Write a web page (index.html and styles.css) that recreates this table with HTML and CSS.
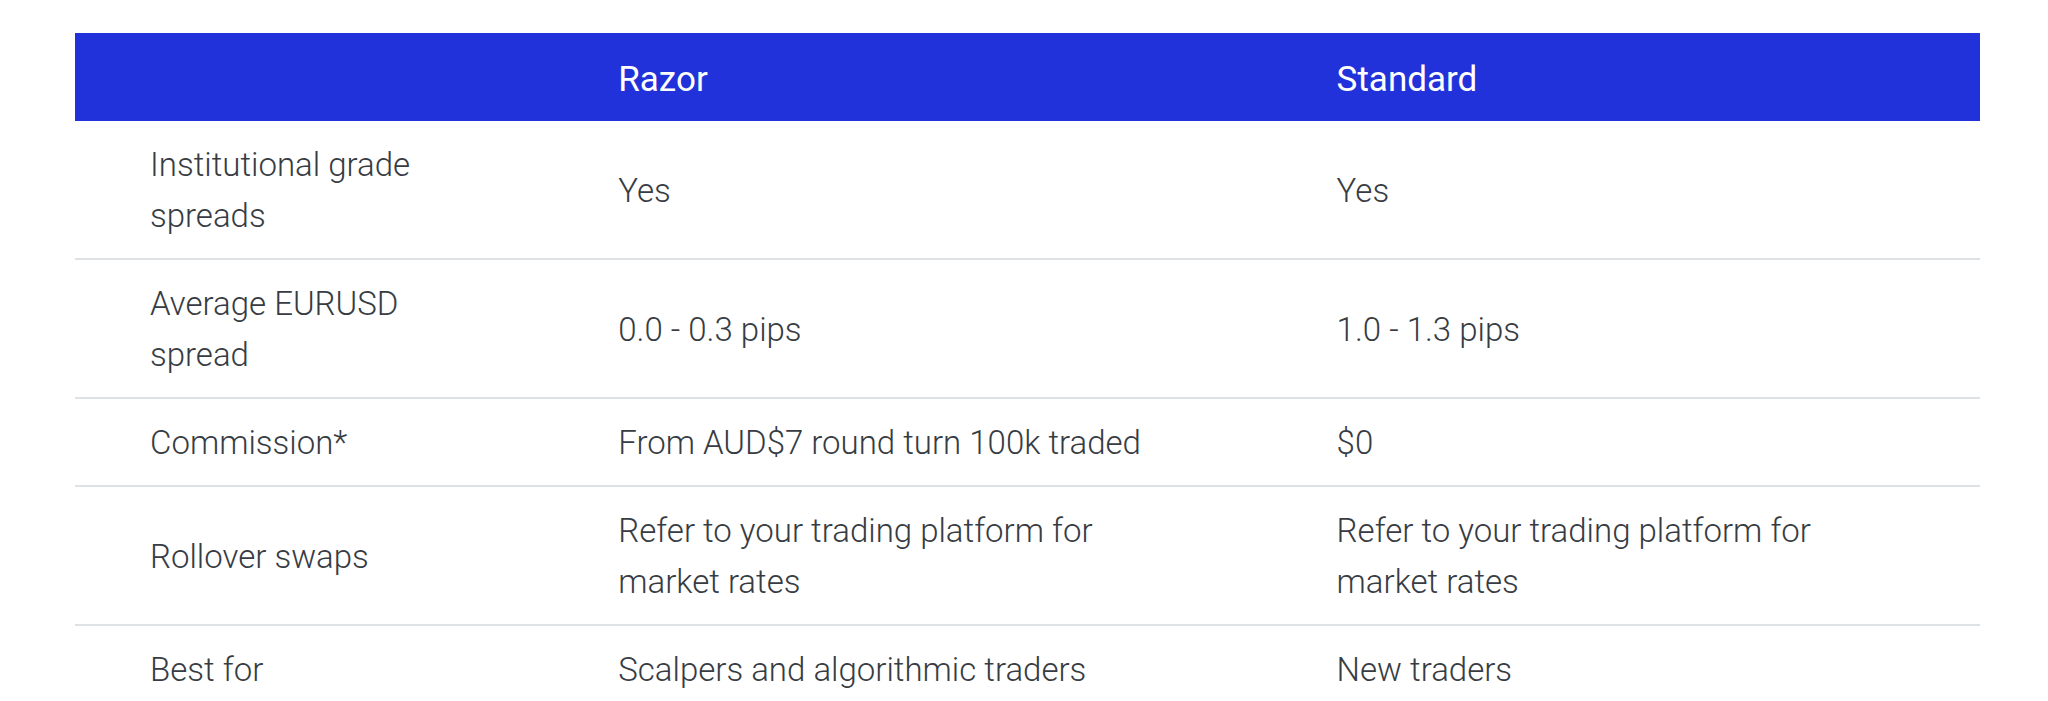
FILE: index.html
```html
<!DOCTYPE html>
<html lang="en">
<head>
<meta charset="utf-8">
<title>Account comparison</title>
<link rel="stylesheet" href="styles.css">
</head>
<body>
<main class="page">
  <table class="compare">
    <colgroup>
      <col class="col-label">
      <col class="col-plan">
      <col class="col-plan">
    </colgroup>
    <thead>
      <tr class="head-row">
        <th></th>
        <th>Razor</th>
        <th>Standard</th>
      </tr>
    </thead>
    <tbody>
      <tr>
        <td>Institutional grade spreads</td>
        <td>Yes</td>
        <td>Yes</td>
      </tr>
      <tr>
        <td>Average EURUSD spread</td>
        <td>0.0 - 0.3 pips</td>
        <td>1.0 - 1.3 pips</td>
      </tr>
      <tr>
        <td>Commission*</td>
        <td>From AUD$7 round turn 100k traded</td>
        <td>$0</td>
      </tr>
      <tr>
        <td>Rollover swaps</td>
        <td>Refer to your trading platform for market rates</td>
        <td>Refer to your trading platform for market rates</td>
      </tr>
      <tr>
        <td>Best for</td>
        <td>Scalpers and algorithmic traders</td>
        <td>New traders</td>
      </tr>
    </tbody>
  </table>
</main>
</body>
</html>
```

FILE: styles.css
```css
html, body {
  margin: 0;
  padding: 0;
  background: #ffffff;
  overflow: hidden;
}

.page {
  padding: 33px 0 0 75px;
}

.compare {
  width: 1905px;
  table-layout: fixed;
  border-collapse: separate;
  border-spacing: 0;
  font-family: Roboto, "Liberation Sans", Arial, sans-serif;
}

.col-label {
  width: 468px;
}

.col-plan {
  width: 718px;
}

.head-row {
  background: #2132db;
}

.compare th {
  padding: 21px 75px 16px;
  text-align: left;
  font-size: 35px;
  font-weight: 400;
  line-height: 51px;
  color: #ffffff;
}

.compare td {
  padding: 18px 75px 17px;
  text-align: left;
  vertical-align: middle;
  font-size: 33px;
  font-weight: 300;
  line-height: 51px;
  color: #373c43;
  border-bottom: 2px solid #dfe2e5;
}
```
